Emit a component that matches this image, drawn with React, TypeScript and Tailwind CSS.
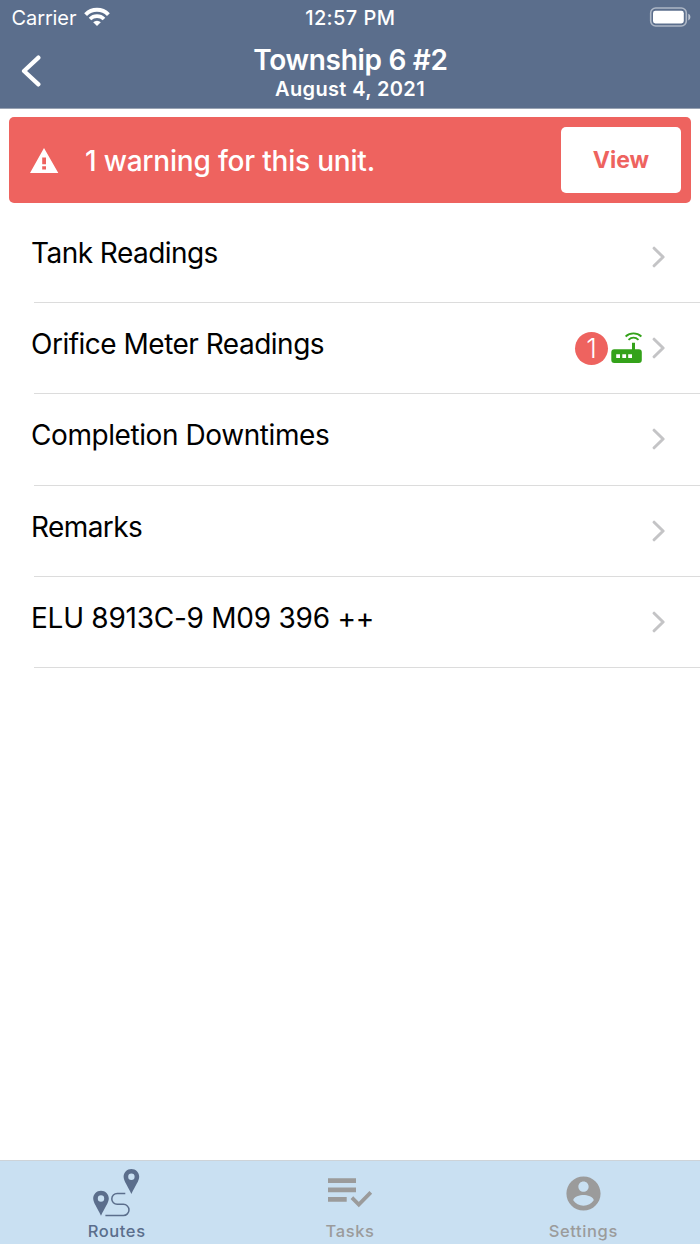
interface ReadingItem {
  label: string
  tracking: string
  warnings?: number
  connected?: boolean
}

const items: ReadingItem[] = [
  { label: 'Tank Readings', tracking: 'tracking-[-0.54px]' },
  { label: 'Orifice Meter Readings', tracking: 'tracking-[-0.5px]', warnings: 1, connected: true },
  { label: 'Completion Downtimes', tracking: 'tracking-[-0.42px]' },
  { label: 'Remarks', tracking: 'tracking-[-0.6px]' },
  { label: 'ELU 8913C-9 M09 396 ++', tracking: 'tracking-[-0.25px]' },
]

const WifiIcon = () => (
  <svg className="h-5 w-[26px]" viewBox="84 7 26 20" fill="none" stroke="white">
    <path d="M85.6 14.6a16.1 16.1 0 0 1 22.8 0" strokeWidth="4" />
    <path d="M90 19a9.9 9.9 0 0 1 14 0" strokeWidth="3.6" />
    <path d="M93.2 22.2a5.4 5.4 0 0 1 7.6 0L97 26z" fill="white" stroke="none" />
  </svg>
)

const BatteryIcon = () => (
  <svg className="h-5 w-[42px]" viewBox="649 7 42 20">
    <rect x="650.7" y="8" width="35.6" height="18" rx="5" fill="none" stroke="white" strokeOpacity="0.5" strokeWidth="1.6" />
    <rect x="653" y="10.8" width="30.8" height="12.6" rx="2.4" fill="white" />
    <path d="M688.3 13.8c2.8 1.2 2.8 5.4 0 6.6z" fill="white" fillOpacity="0.6" />
  </svg>
)

const BackIcon = () => (
  <svg className="h-8 w-[22px]" viewBox="0 0 22 32" fill="none" stroke="white" strokeWidth="4.2" strokeLinecap="round" strokeLinejoin="round">
    <path d="M18.4 2.6 4 16l14.4 13.4" />
  </svg>
)

const WarningIcon = () => (
  <svg className="h-[25px] w-[29px]" viewBox="0 0 29 25">
    <path fill="white" fillRule="evenodd" d="M14 0 28.3 25H0zM12.2 9.5v6.8H16V9.5zM12.2 18.2v3.2H16v-3.2z" />
  </svg>
)

const ChevronIcon = () => (
  <svg className="h-[22px] w-[14px]" viewBox="0 0 14 22" fill="none" stroke="#c4c4c6" strokeWidth="3" strokeLinecap="round" strokeLinejoin="round">
    <path d="m2.1 2.2 9 8.8-9 8.8" />
  </svg>
)

const RouterIcon = () => (
  <svg className="h-8 w-[31px]" viewBox="611 332 31 32" fill="#34a21a">
    <path
      fillRule="evenodd"
      d="M632 342.7h3v6.5h3.8a3 3 0 0 1 3 3v7.8a3 3 0 0 1-3 3h-24.5a3 3 0 0 1-3-3v-7.8a3 3 0 0 1 3-3H632zM616.2 354.3v3.8h3.8v-3.8zM622.3 354.3v3.8h3.8v-3.8zM628.2 354.3v3.8h3.8v-3.8z"
    />
    <path d="M625.6 336.5c4.6-4.1 11.2-4.1 15.8 0M628.5 339.8c3-2.7 7-2.7 10 0" fill="none" stroke="#34a21a" strokeWidth="1.8" />
  </svg>
)

const RoutesIcon = () => (
  <svg className="h-12 w-12" viewBox="93 1169 48 48" fill="#5b6e8c">
    <path
      fillRule="evenodd"
      d="M131.4 1169c4.4 0 7.8 3.4 7.8 7.8 0 4.2-4 9-7.8 17.2-3.8-8.2-7.8-13-7.8-17.2 0-4.4 3.4-7.8 7.8-7.8zm0 4.5a3.2 3.2 0 1 0 0 6.4 3.2 3.2 0 0 0 0-6.4z"
    />
    <path
      fillRule="evenodd"
      d="M101 1190.8c4.4 0 7.8 3.4 7.8 7.8 0 4.2-4 9-7.8 17.2-3.8-8.2-7.8-13-7.8-17.2 0-4.4 3.4-7.8 7.8-7.8zm0 4.5a3.2 3.2 0 1 0 0 6.4 3.2 3.2 0 0 0 0-6.4z"
    />
    <path d="M125.3 1193.5h-8.1a5.4 5.4 0 0 0 0 10.8h6.2a5.6 5.6 0 0 1 0 11.2h-18" fill="none" stroke="#5b6e8c" strokeWidth="1.5" />
  </svg>
)

const TasksIcon = () => (
  <svg className="h-12 w-[46px]" viewBox="327 1169 46 48" fill="#9b9b9b">
    <path d="M328 1178.3h28v4.7h-28zM328 1187.6h28v4.7h-28zM328 1197h18.7v4.7H328z" />
    <path d="m351.9 1197.6 6.9 6.9 12-12.2" fill="none" stroke="#9b9b9b" strokeWidth="3.8" />
  </svg>
)

const SettingsIcon = () => (
  <svg className="h-[41px] w-[41px]" viewBox="0 0 24 24" fill="#9b9b9b">
    <path d="M12 2C6.48 2 2 6.48 2 12s4.48 10 10 10 10-4.48 10-10S17.52 2 12 2zm0 3c1.66 0 3 1.34 3 3s-1.34 3-3 3-3-1.34-3-3 1.34-3 3-3zm0 14.2c-2.5 0-4.71-1.28-6-3.22.03-1.99 4-3.08 6-3.08 1.99 0 5.97 1.09 6 3.08-1.29 1.94-3.5 3.22-6 3.22z" />
  </svg>
)

const Header = () => (
  <header className="h-[109px] border-b border-[#98a2b2] bg-[#5b6e8c] text-white">
    <div className="grid h-9 grid-cols-3 items-center pl-[11.5px] pr-[9px]">
      <div className="flex items-center gap-[7.5px] pb-0.5">
        <span className="pt-0.5 text-[20px] font-normal tracking-[-0.1px]">Carrier</span>
        <WifiIcon />
      </div>
      <span className="pr-0.5 text-center text-[20px] font-medium tracking-[0.4px]">12:57 PM</span>
      <div className="flex justify-end pb-0.5">
        <BatteryIcon />
      </div>
    </div>
    <div className="grid grid-cols-[40px_1fr_40px] px-5">
      <button className="mt-[19px] h-8" aria-label="Back">
        <BackIcon />
      </button>
      <div className="pt-1.5 text-center">
        <h1 className="pl-px text-[28px] leading-9 font-semibold tracking-[-0.3px]">Township 6 #2</h1>
        <p className="text-[20px] leading-[22px] font-semibold tracking-[0.37px]">August 4, 2021</p>
      </div>
    </div>
  </header>
)

const WarningBanner = () => (
  <div className="mx-[9px] mt-2 flex h-[86px] items-center rounded-[5px] bg-[#ee635f] pr-[10px] pl-[21px] text-white">
    <WarningIcon />
    <span className="ml-[26px] flex-1 pt-px text-[28px] font-medium tracking-[-0.2px]">1 warning for this unit.</span>
    <button className="h-[66px] w-[120px] rounded-[5px] bg-white text-[23px] font-bold text-[#ee635f]">View</button>
  </div>
)

const ReadingRow: React.FC<{ item: ReadingItem }> = ({ item }) => (
  <li className="flex h-[91.25px] flex-col">
    <div className="flex flex-1 items-center pr-[34px] pl-[31px]">
      <span className={`flex-1 pb-2 text-[28px] ${item.tracking}`}>{item.label}</span>
      {item.warnings && (
        <span className="mr-[3px] flex h-[33px] w-[33px] items-center justify-center rounded-full bg-[#ee635f] pt-0.5 text-[27px] font-light text-white">
          {item.warnings}
        </span>
      )}
      {item.connected && (
        <span className="mr-[10px]">
          <RouterIcon />
        </span>
      )}
      <ChevronIcon />
    </div>
    <div className="ml-[34px] h-px bg-[#dcdcdc]" />
  </li>
)

const TabBar = () => (
  <nav className="grid h-[84px] grid-cols-3 border-t border-[#cdd3d8] bg-[#c9e0f2] text-[16.5px] leading-5 font-medium tracking-[0.6px] text-[#9b9b9b]">
    <div className="flex flex-col items-center pt-2 text-[#5b6e8c]">
      <RoutesIcon />
      <span className="mt-1">Routes</span>
    </div>
    <div className="flex flex-col items-center pt-2">
      <TasksIcon />
      <span className="mt-1">Tasks</span>
    </div>
    <div className="flex flex-col items-center pt-[11.5px]">
      <SettingsIcon />
      <span className="mt-[7.5px]">Settings</span>
    </div>
  </nav>
)

const App = () => (
  <div className="flex h-[1244px] w-[700px] flex-col overflow-hidden bg-white font-['Inter',sans-serif] text-black">
    <Header />
    <WarningBanner />
    <ul className="flex-1 pt-[8.75px]">
      {items.map((item) => (
        <ReadingRow key={item.label} item={item} />
      ))}
    </ul>
    <TabBar />
  </div>
)

export default App
